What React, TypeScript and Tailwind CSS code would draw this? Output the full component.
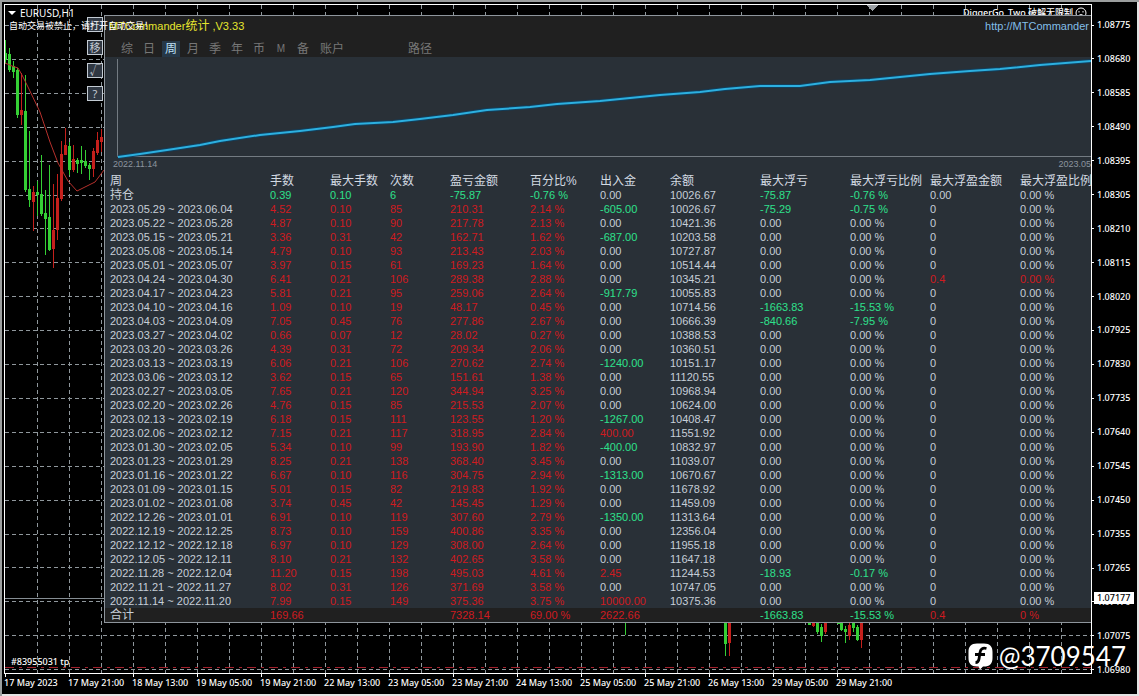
import { useState } from "react";
import { clsx } from "clsx";

const TABS = ["综", "日", "周", "月", "季", "年", "币", "M", "备"];

const PRICES = [
  "1.08775", "1.08680", "1.08585", "1.08490", "1.08395", "1.08305", "1.08210",
  "1.08115", "1.08020", "1.07925", "1.07830", "1.07735", "1.07640", "1.07545",
  "1.07450", "1.07355", "1.07265", "1.07170", "1.07075", "1.06980",
];

const TIMES = [
  "17 May 2023", "17 May 21:00", "18 May 13:00", "19 May 05:00", "19 May 21:00",
  "22 May 13:00", "23 May 05:00", "23 May 21:00", "24 May 13:00", "25 May 05:00",
  "25 May 21:00", "26 May 13:00", "29 May 05:00", "29 May 21:00",
];

const COLUMNS = [
  "周", "手数", "最大手数", "次数", "盈亏金额", "百分比%",
  "出入金", "余额", "最大浮亏", "最大浮亏比例", "最大浮盈金额", "最大浮盈比例",
];

// week | lots | max lot | trades | profit | percent | deposit | balance
// then optional: drawdown | drawdown % | float profit | float profit %
const WEEKS: string[][] = [
  ["2023.05.29 ~ 2023.06.04", "4.52", "0.10", "85", "210.31", "2.14 %", "-605.00", "10026.67", "-75.29", "-0.75 %"],
  ["2023.05.22 ~ 2023.05.28", "4.87", "0.10", "90", "217.78", "2.13 %", "0.00", "10421.36"],
  ["2023.05.15 ~ 2023.05.21", "3.36", "0.31", "42", "162.71", "1.62 %", "-687.00", "10203.58"],
  ["2023.05.08 ~ 2023.05.14", "4.79", "0.10", "93", "213.43", "2.03 %", "0.00", "10727.87"],
  ["2023.05.01 ~ 2023.05.07", "3.97", "0.15", "61", "169.23", "1.64 %", "0.00", "10514.44"],
  ["2023.04.24 ~ 2023.04.30", "6.41", "0.21", "106", "289.38", "2.88 %", "0.00", "10345.21", "0.00", "0.00 %", "0.4", "0.00 %"],
  ["2023.04.17 ~ 2023.04.23", "5.81", "0.21", "95", "259.06", "2.64 %", "-917.79", "10055.83"],
  ["2023.04.10 ~ 2023.04.16", "1.09", "0.10", "19", "48.17", "0.45 %", "0.00", "10714.56", "-1663.83", "-15.53 %"],
  ["2023.04.03 ~ 2023.04.09", "7.05", "0.45", "76", "277.86", "2.67 %", "0.00", "10666.39", "-840.66", "-7.95 %"],
  ["2023.03.27 ~ 2023.04.02", "0.66", "0.07", "12", "28.02", "0.27 %", "0.00", "10388.53"],
  ["2023.03.20 ~ 2023.03.26", "4.39", "0.31", "72", "209.34", "2.06 %", "0.00", "10360.51"],
  ["2023.03.13 ~ 2023.03.19", "6.06", "0.21", "106", "270.62", "2.74 %", "-1240.00", "10151.17"],
  ["2023.03.06 ~ 2023.03.12", "3.62", "0.15", "65", "151.61", "1.38 %", "0.00", "11120.55"],
  ["2023.02.27 ~ 2023.03.05", "7.65", "0.21", "120", "344.94", "3.25 %", "0.00", "10968.94"],
  ["2023.02.20 ~ 2023.02.26", "4.76", "0.15", "85", "215.53", "2.07 %", "0.00", "10624.00"],
  ["2023.02.13 ~ 2023.02.19", "6.18", "0.15", "111", "123.55", "1.20 %", "-1267.00", "10408.47"],
  ["2023.02.06 ~ 2023.02.12", "7.15", "0.21", "117", "318.95", "2.84 %", "400.00", "11551.92"],
  ["2023.01.30 ~ 2023.02.05", "5.34", "0.10", "99", "193.90", "1.82 %", "-400.00", "10832.97"],
  ["2023.01.23 ~ 2023.01.29", "8.25", "0.21", "138", "368.40", "3.45 %", "0.00", "11039.07"],
  ["2023.01.16 ~ 2023.01.22", "6.67", "0.10", "116", "304.75", "2.94 %", "-1313.00", "10670.67"],
  ["2023.01.09 ~ 2023.01.15", "5.01", "0.15", "82", "219.83", "1.92 %", "0.00", "11678.92"],
  ["2023.01.02 ~ 2023.01.08", "3.74", "0.45", "42", "145.45", "1.29 %", "0.00", "11459.09"],
  ["2022.12.26 ~ 2023.01.01", "6.91", "0.10", "119", "307.60", "2.79 %", "-1350.00", "11313.64"],
  ["2022.12.19 ~ 2022.12.25", "8.73", "0.10", "159", "400.86", "3.35 %", "0.00", "12356.04"],
  ["2022.12.12 ~ 2022.12.18", "6.97", "0.10", "129", "308.00", "2.64 %", "0.00", "11955.18"],
  ["2022.12.05 ~ 2022.12.11", "8.10", "0.21", "132", "402.65", "3.58 %", "0.00", "11647.18"],
  ["2022.11.28 ~ 2022.12.04", "11.20", "0.15", "198", "495.03", "4.61 %", "2.45", "11244.53", "-18.93", "-0.17 %"],
  ["2022.11.21 ~ 2022.11.27", "8.02", "0.31", "126", "371.69", "3.58 %", "0.00", "10747.05"],
  ["2022.11.14 ~ 2022.11.20", "7.99", "0.15", "149", "375.36", "3.75 %", "10000.00", "10375.36"],
];
const DEFAULT_TAIL = ["0.00", "0.00 %", "0", "0.00 %"];

const OPEN_ROW = ["持仓", "0.39", "0.10", "6", "-75.87", "-0.76 %", "0.00", "10026.67", "-75.87", "-0.76 %", "0.00", "0.00 %"];
const TOTAL_ROW = ["合计", "169.66", "", "", "7328.14", "69.00 %", "2622.66", "", "-1663.83", "-15.53 %", "0.4", "0 %"];

// [x, wick top, wick bottom, body top, body bottom, rising]
const CANDLES: [number, number, number, number, number, boolean][] = [
  [5, 40, 64, 53, 60, true], [9, 48, 72, 54, 70, true], [13, 61, 78, 66, 72, true],
  [17, 68, 118, 70, 115, true], [21, 73, 125, 110, 115, false], [25, 75, 192, 111, 190, true],
  [29, 131, 207, 189, 200, true], [33, 186, 231, 192, 202, false], [37, 181, 216, 192, 195, true],
  [41, 155, 216, 194, 214, true], [45, 190, 255, 213, 219, true], [49, 165, 251, 217, 250, true],
  [53, 184, 268, 230, 249, false], [57, 174, 240, 198, 230, false], [61, 141, 201, 154, 199, false],
  [65, 128, 155, 145, 155, false], [69, 142, 175, 146, 170, true], [73, 145, 172, 159, 170, false],
  [77, 158, 173, 160, 164, true], [81, 146, 174, 160, 163, true], [85, 150, 168, 161, 166, true],
  [89, 163, 180, 165, 169, true], [93, 148, 177, 151, 169, false], [97, 132, 155, 140, 153, false],
  [101, 129, 152, 137, 142, false],
  [625, 600, 635, 600, 610, true], [725, 600, 656, 600, 644, true], [729, 600, 656, 600, 643, false],
  [809, 600, 625, 600, 625, true], [813, 600, 627, 600, 626, false], [817, 600, 634, 600, 632, true],
  [821, 624, 642, 627, 636, true], [825, 600, 634, 600, 632, false], [838, 600, 624, 600, 624, true],
  [841, 600, 631, 600, 630, true], [845, 626, 643, 629, 632, true], [849, 623, 640, 625, 636, false],
  [853, 600, 632, 600, 628, true], [857, 625, 641, 627, 640, true], [861, 600, 648, 600, 640, false],
];

const EQUITY =
  "118,157 140,154 167,150 200,145 220,141 260,135 300,131 333,127 355,124 393,122 420,119 453,115 487,110 530,107 557,104 600,101 630,98 660,95 700,92 725,89 760,86 800,86 830,82 870,80 900,77 930,74 970,71 1000,69 1040,65 1092,61";

const RED = "text-[#cf1b20]";
const GREEN = "text-[#2ee08c]";
const PLAIN = "text-[#c6ced8]";

function cellColor(col: number, value: string) {
  if (col === 0 || col === 7) return PLAIN;
  if (value.startsWith("-")) return GREEN;
  if (col < 6) return RED;
  return parseFloat(value) > 0 ? RED : PLAIN;
}

function ChartBackdrop() {
  return (
    <svg className="absolute inset-0 size-full" aria-hidden="true" shapeRendering="crispEdges">
      {/* candle data is measured from the window corner, the frame takes 5px */}
      <g transform="translate(-5 -5)">
        {Array.from({ length: 34 }, (_, i) => (
          <line key={i} x1={37.5 + i * 32} x2={37.5 + i * 32} y1="5" y2="673" stroke="#8f979c" strokeDasharray="4 3" />
        ))}
        {PRICES.map((p, i) => {
          const y = Math.round(25 + i * 33.9) + 0.5;
          return <line key={p} x1="5" x2="1092" y1={y} y2={y} stroke="#8f979c" strokeDasharray="4 3" />;
        })}
        <line x1="5" x2="1092" y1="598.5" y2="598.5" stroke="#858d93" />
        <line x1="5" x2="1092" y1="667.5" y2="667.5" stroke="#a3202c" strokeDasharray="9 5 3 5" />
        {CANDLES.map(([x, wt, wb, bt, bb, up]) => (
          <g key={x} fill={up ? "#35cf35" : "#c5201c"}>
            <rect x={x} y={wt} width="1" height={wb - wt} />
            {x !== 625 && <rect x={x - 1} y={bt} width="3" height={bb - bt} />}
          </g>
        ))}
        <polyline
          points="5,63 12,66 18,68 22,75 28,87 40,112 50,142 58,163 68,181 77,191 95,182 104,170"
          fill="none"
          stroke="#b5302c"
          shapeRendering="auto"
        />
        <polygon points="867,5 878,5 872.5,11" fill="#9a9fa3" />
      </g>
    </svg>
  );
}

function EquityChart() {
  return (
    <div className="relative h-[117px] overflow-hidden">
      <svg className="absolute inset-0 size-full" role="img" aria-label="Equity curve">
        <g transform="translate(-105 -57)">
          <path d="M117.5 59V156.500H1092" fill="none" stroke="#737b82" />
          <polyline points={EQUITY} fill="none" stroke="#123f5c" strokeWidth="4" />
          <polyline points={EQUITY} fill="none" stroke="#2cb0e0" strokeWidth="2" />
        </g>
      </svg>
      <div className="flex justify-between pt-[100px] pl-2 text-[9px] leading-[14px] text-[#8b949e]">
        <span>2022.11.14</span>
        <span>2023.05</span>
      </div>
    </div>
  );
}

function StatsTable() {
  return (
    <table className="w-full table-fixed border-collapse text-left text-[11px] leading-[14px] whitespace-nowrap">
      <colgroup>
        <col className="w-[160px]" />
        <col className="w-[60px]" />
        <col className="w-[60px]" />
        <col className="w-[60px]" />
        <col className="w-[80px]" />
        <col className="w-[70px]" />
        <col className="w-[70px]" />
        <col className="w-[90px]" />
        <col className="w-[90px]" />
        <col className="w-[80px]" />
        <col className="w-[90px]" />
        <col />
      </colgroup>
      <thead>
        <tr className="text-[12px] text-[#d3dae2]">
          {COLUMNS.map((c) => (
            <th key={c} scope="col" className="h-[14px] p-0 pl-[5px] font-normal">
              {c}
            </th>
          ))}
        </tr>
      </thead>
      <tbody>
        <tr>
          {OPEN_ROW.map((v, i) => (
            <td
              key={i}
              className={clsx(
                "h-[14px] p-0 pl-[5px]",
                i === 0 && "text-[12px]",
                (i >= 1 && i <= 5) || i === 8 || i === 9 ? GREEN : PLAIN
              )}
            >
              {v}
            </td>
          ))}
        </tr>
        {WEEKS.map((week) => {
          const row = [...week, ...DEFAULT_TAIL.slice(week.length - 8)];
          const floating = row[10] !== "0";
          return (
            <tr key={row[0]}>
              {row.map((v, i) => (
                <td
                  key={i}
                  className={clsx("h-[14px] p-0 pl-[5px]", i === 11 && floating ? RED : cellColor(i, v))}
                >
                  {v}
                </td>
              ))}
            </tr>
          );
        })}
      </tbody>
      <tfoot>
        <tr className="bg-[#202020]">
          {TOTAL_ROW.map((v, i) => (
            <td
              key={i}
              className={clsx("h-[14px] p-0 pl-[5px]", i === 0 && "text-[12px]", i === 11 ? RED : cellColor(i, v))}
            >
              {v}
            </td>
          ))}
        </tr>
      </tfoot>
    </table>
  );
}

function StatsPanel() {
  const [active, setActive] = useState("周");

  return (
    <section className="absolute top-[10px] right-0 left-[99px] overflow-hidden border-y border-l border-[#8e959c] bg-[#293037]">
      <header className="h-[41px] bg-[#202020]">
        <div className="flex justify-between pt-[2px] pr-[2px] pl-1 text-[11px] leading-4">
          <h1 className="text-[#e6e62e]">
            MTCommander<span className="text-[12px]">统计</span> ,V3.33
          </h1>
          <a href="http://MTCommander" className="text-[#83bfe8]">
            http://MTCommander
          </a>
        </div>
        <nav className="flex pt-[7px] pl-[11px] text-[12px] leading-4 text-[#777]">
          {TABS.map((t) => (
            <button
              key={t}
              onClick={() => setActive(t)}
              className={clsx(
                "mx-[2px] w-[18px] text-center",
                t === "M" && "text-[10px]",
                t === active && "bg-[#263848] text-[#bfe0f5]"
              )}
            >
              {t}
            </button>
          ))}
          <button onClick={() => setActive("账户")} className="ml-[6px]">
            账户
          </button>
          <button onClick={() => setActive("路径")} className="ml-16">
            路径
          </button>
        </nav>
      </header>
      <EquityChart />
      <StatsTable />
    </section>
  );
}

function Watermark() {
  return (
    <div className="absolute right-[11px] bottom-[22px] flex items-center gap-[6px] text-white">
      <svg width="25" height="27" viewBox="0 0 25 27" aria-hidden="true">
        <path
          d="M9 0.500H16C22 0.500 24.500 3.500 24.500 9V15C24.500 21 21.500 23.500 16 23.500H15L12 26.500L10.500 23.500H9C3 23.500 0.500 20.500 0.500 15V9C0.500 3.500 3 0.500 9 0.500Z"
          fill="#fff"
        />
        <path
          d="M18.500 5.500C14.500 4.500 12.500 6 12 9.500L11 16C10.600 18.500 9.500 19.500 7.500 19.500M7 11.500H17"
          fill="none"
          stroke="#000"
          strokeWidth="2.800"
        />
      </svg>
      <span className="font-['Lato',sans-serif] text-[26px] leading-8">@3709547</span>
    </div>
  );
}

export default function App() {
  return (
    <div className="flex min-h-screen flex-col border-t-2 border-l-2 border-[#9b9e9e] bg-[#e4e4e4] pr-[2px] pb-[2px] font-['Liberation_Sans','Noto_Sans_CJK_SC',sans-serif]">
      <main className="relative flex flex-1 flex-col overflow-hidden bg-black pt-[2px] pl-[2px] text-white">
        <div className="flex flex-1">
          <div className="relative flex-1 overflow-hidden border border-white font-['Noto_Sans','Noto_Sans_CJK_SC',sans-serif]">
            <ChartBackdrop />
            <div className="relative flex justify-between pr-1 pl-[3px] leading-4">
              <span className="flex items-center gap-1 text-[10px]">
                <svg width="8" height="4" aria-hidden="true">
                  <path d="M0 0H8L4 4Z" fill="#fff" />
                </svg>
                EURUSD,H1
              </span>
              <span className="flex items-center gap-[2px] text-[9px] font-medium">
                DiggerGo_Two 破解无限制
                <svg width="12" height="12" viewBox="0 0 12 12" fill="none" stroke="#fff" aria-hidden="true">
                  <circle cx="6" cy="6" r="5" />
                  <path d="M4 4V5.500M8 4V5.500M3.500 8.500Q6 6.500 8.500 8.500" />
                </svg>
              </span>
            </div>

            <div className="absolute top-[12px] left-[82px] flex flex-col gap-2 text-[11px] leading-3">
              {["－", "移", "√", "?"].map((label) => (
                <button
                  key={label}
                  className="flex h-[15px] w-4 items-center justify-center overflow-hidden border border-[#c3cbd3] bg-[#303843] text-[#c3cbd3]"
                >
                  {label}
                </button>
              ))}
            </div>

            <div className="font-['Liberation_Sans','Noto_Sans_CJK_SC',sans-serif]">
              <StatsPanel />
            </div>

            <p className="absolute top-[13px] left-[4px] text-[9px] leading-4 whitespace-nowrap">
              自动交易被禁止，请打开自动交易！
            </p>
            <p className="absolute bottom-[3px] left-[6px] text-[9px] leading-4 font-medium">#83955031 tp</p>
          </div>

          <div className="relative w-[45px] pt-[14px] font-['Noto_Sans',sans-serif] text-[9px] leading-[14px] font-medium">
            <ul className="flex h-[calc(100%+3px)] flex-col justify-between">
              {PRICES.map((p) => (
                <li key={p} className="flex h-[14px] items-center gap-[3px]">
                  <span className="h-px w-[2px] bg-white" />
                  {p}
                </li>
              ))}
            </ul>
            <span className="absolute top-[588px] right-[3px] left-[2px] bg-white pl-[3px] leading-3 text-black">
              1.07177
            </span>
          </div>
        </div>

        <ul className="flex h-5 font-['Noto_Sans',sans-serif] text-[9px] leading-3 font-medium">
          {TIMES.map((t) => (
            <li key={t} className="w-16 shrink-0 whitespace-nowrap">
              <span className="ml-px block h-[3px] w-px bg-white" />
              {t}
            </li>
          ))}
        </ul>

        <Watermark />
      </main>
    </div>
  );
}
